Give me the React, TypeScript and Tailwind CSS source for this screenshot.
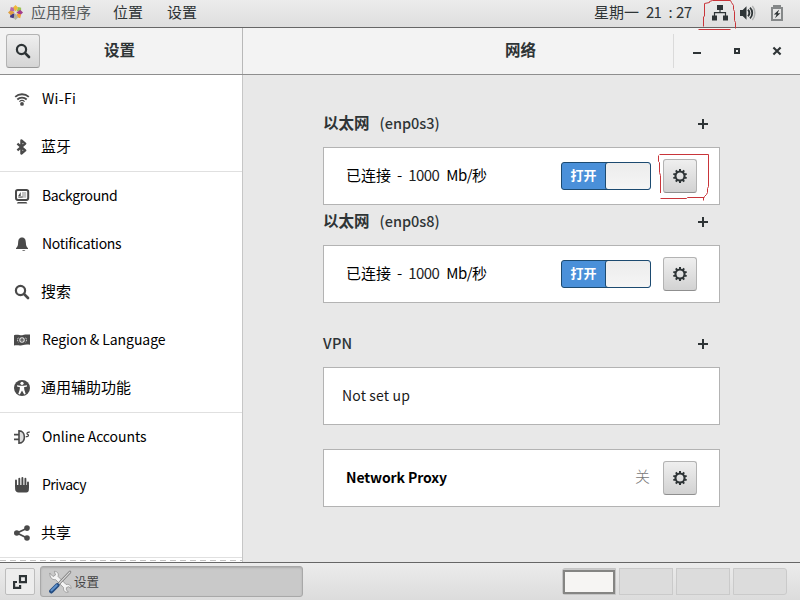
import React from "react";

const INK = "#2e3436";
const GREY = "#4a4a4a";

function Svg({ size = 16, children, className = "" }: { size?: number; children: React.ReactNode; className?: string }) {
  return (
    <svg width={size} height={size} viewBox="0 0 16 16" className={"shrink-0 " + className} fill="none">
      {children}
    </svg>
  );
}

function SearchIcon({ color }: { color: string }) {
  return (
    <Svg>
      <circle cx="6.5" cy="6.5" r="4.6" stroke={color} strokeWidth="2.2" />
      <path d="M9.9 9.9 14 14" stroke={color} strokeWidth="2.7" strokeLinecap="round" />
    </Svg>
  );
}

function GearIcon() {
  const teeth = [0, 36, 72, 108, 144, 180, 216, 252, 288, 324];
  return (
    <Svg>
      <circle cx="8" cy="8" r="4.5" stroke={INK} strokeWidth="2" />
      {teeth.map((a) => (
        <rect key={a} x="7" y="1" width="2" height="3" fill={INK} transform={`rotate(${a} 8 8)`} />
      ))}
    </Svg>
  );
}

const icons: Record<string, React.ReactNode> = {
  wifi: (
    <Svg>
      <path d="M1.2 5.8C5 2.4 11 2.4 14.8 5.8" stroke={GREY} strokeWidth="1.8" />
      <path d="M3.3 8.5C6 6 10 6 12.7 8.5" stroke={GREY} strokeWidth="1.8" />
      <path d="M5.4 10.6C7 9.2 9 9.2 10.6 10.6" stroke={GREY} strokeWidth="1.2" />
      <circle cx="8" cy="12.9" r="1.9" fill={GREY} />
    </Svg>
  ),
  bluetooth: (
    <Svg>
      <path d="M3.4 4.6 11.2 11.4 7.4 14.6V1.4L11.2 4.6 3.4 11.4" stroke={GREY} strokeWidth="2.3" strokeLinejoin="round" />
    </Svg>
  ),
  background: (
    <Svg>
      <rect x="2" y="1.9" width="12.2" height="10" rx="1.8" stroke={GREY} strokeWidth="2" />
      <path d="M7 4h5.2v5.8H5V9h3V4Z" fill="#c4c4c4" />
      <path d="M6.7 4v4H4.2Z" fill={GREY} />
      <path d="M4.2 9h4.4" stroke={GREY} />
      <path d="M3.8 14h8.6l1 1.4H2.8Z" fill={GREY} />
    </Svg>
  ),
  bell: (
    <Svg>
      <path d="M8 1.6C4.9 1.6 4.3 4 4.1 7 4 10 3.2 11 2 12.2V13h12v-.8C12.8 11 12 10 11.9 7c-.2-3-.8-5.4-3.9-5.4Z" fill={GREY} />
      <path d="M8 14h3.4c-.3 1-3 1-3.4 0Z" fill={GREY} />
    </Svg>
  ),
  search: <SearchIcon color={GREY} />,
  region: (
    <Svg>
      <path d="M0 3.2C4 1.8 6 3.8 9 3c2.5-.7 4.5-.6 7-.4v10.2c-3-.8-5-.3-8 .4-3 .6-5-.5-8 .4Z" fill={GREY} />
      <circle cx="8" cy="8" r="2.2" stroke="#e5e5e5" strokeWidth="1.1" />
      <path d="M4.4 5.7c-1.2 1.4-1.2 3.2 0 4.6M11.6 5.7c1.2 1.4 1.2 3.2 0 4.6" stroke="#ccc" strokeWidth="1" strokeDasharray="1.4 .7" />
      <circle cx="8" cy="8" r=".6" fill="#ddd" />
    </Svg>
  ),
  access: (
    <Svg>
      <circle cx="8" cy="8" r="8" fill={GREY} />
      <circle cx="8" cy="3.3" r="1.6" fill="#fff" />
      <path d="M3 5.2 6.4 5.7h3.2L13 5.2v1.3L10 7.3l.4 2.7 1.3 4-1.5.5L8 10.6 5.8 14.5 4.3 14 5.6 10 6 7.3 3 6.5Z" fill="#fff" />
    </Svg>
  ),
  accounts: (
    <Svg>
      <path d="M0 5.6h5M0 10.4h5" stroke={GREY} strokeWidth="1.7" />
      <path d="M5 1.9c7.2 0 7.2 12.2 0 12.2Z" fill="#ddd" stroke={GREY} strokeWidth="1.6" />
      <path d="M11.8 7.6h1.2c1.8 0 2-1.7.6-2.2-1.4-.5-.5-2.6 2.2-2.3" stroke={GREY} strokeWidth="1.2" />
    </Svg>
  ),
  privacy: (
    <Svg>
      <path
        d="M2 3.5v6M5.3 1.8v8M8.4 1v8M11.4 1.8v8M14 5.5v5"
        stroke={GREY}
        strokeWidth="1.9"
        strokeLinecap="round"
      />
      <path d="M1.1 8h13.8v4.6c0 2-1 3-2.6 3H4.6c-2 0-3.5-1.5-3.5-3.5Z" fill={GREY} />
    </Svg>
  ),
  share: (
    <Svg>
      <path d="M13 3.2 3 8l10 5" stroke={GREY} strokeWidth="1.8" />
      <circle cx="13" cy="3.1" r="2.8" fill={GREY} />
      <circle cx="2.8" cy="8" r="2.8" fill={GREY} />
      <circle cx="13" cy="13" r="2.8" fill={GREY} />
    </Svg>
  ),
};

/* Han labels are slightly larger than Latin ones */
const HAN = "text-[15px] -ml-px";

function NavRow({ icon, label, text = HAN }: { icon: string; label: string; text?: string }) {
  return (
    <div className="flex h-12 shrink-0 items-center gap-3 pl-3.5 text-black">
      {icons[icon]}
      <span className={"pb-0.5 leading-5 whitespace-nowrap " + text}>{label}</span>
    </div>
  );
}

function GearButton() {
  return (
    <button className="flex h-[34px] w-[34px] shrink-0 items-center justify-center rounded-[3px] border border-[#b3b3b3] border-b-[#8f8f8f] bg-linear-to-b from-[#efefef] to-[#d2d2d2]">
      <GearIcon />
    </button>
  );
}

function Toggle() {
  return (
    <div className="mr-3 flex h-7 w-[90px] shrink-0 overflow-hidden rounded-[3px] border border-[#1c4a70] bg-[#4a90d9]">
      <div className="flex w-[43px] items-center justify-center pb-[3px] text-[13px] leading-none font-bold text-white">
        打开
      </div>
      <div className="-my-px -mr-px flex-1 rounded-[3px] border border-[#1c4a70] bg-linear-to-b from-[#ececec] to-[#f5f5f5]" />
    </div>
  );
}

function Heading({ children }: { children: React.ReactNode }) {
  return (
    <div className="mb-1.5 flex h-[34px] items-center justify-between pr-3 text-[#2e3436]">
      <div className="flex items-center pb-0.5 whitespace-nowrap">{children}</div>
      <svg width="10" height="10" viewBox="0 0 10 10">
        <path d="M4 0h2v4h4v2H6v4H4V6H0V4h4Z" fill={INK} />
      </svg>
    </div>
  );
}

function Ethernet({ name }: { name: string }) {
  return (
    <section>
      <Heading>
        <span className="text-[15.5px] font-bold">以太网</span>
        <span className="ml-2.5 text-[14.5px] font-medium">({name})</span>
      </Heading>
      <div className="flex h-[58px] items-center border border-[#b3b3b3] bg-white px-[22px] text-[15px] text-black">
        <div className="flex flex-1 items-center pb-0.5 whitespace-nowrap">
          <span>已连接</span>
          <span className="ml-[6px]">-</span>
          <span className="ml-[6px] w-[31px] tracking-[-0.6px] text-[#222]">1000</span>
          <span className="ml-[7px] tracking-[-0.5px]">Mb/</span>
          <span>秒</span>
        </div>
        <Toggle />
        <GearButton />
      </div>
    </section>
  );
}

export default function App() {
  return (
    <div className="relative flex h-[600px] w-[800px] flex-col overflow-hidden bg-[#e8e8e8] font-['Noto_Sans_CJK_SC',sans-serif]">
      <nav className="flex h-7 shrink-0 items-center border-b border-[#666] bg-linear-to-b from-[#ececec] to-[#dedede] pb-[2px] text-[15px] text-[#2e3436]">
        <svg width="15" height="15" viewBox="0 0 16 16" className="ml-2 shrink-0">
          <path d="M8 7 5 3l3-3 3 3Z" fill="#f0b93c" />
          <path d="M9 7 11 2l3 1v3Z" fill="#9bc44e" />
          <path d="m9 8 4-3 3 3-3 3Z" fill="#a23c8c" />
          <path d="m9 9 5 1-1 4-3-1Z" fill="#f2a33a" />
          <path d="m8 9 3 4-3 3-3-3Z" fill="#b5b4a0" />
          <path d="m7 9-1 5-4-1 1-4Z" fill="#463a80" />
          <path d="M7 8 3 11 0 8l3-3Z" fill="#e0a040" />
          <path d="M7 7 2 6l1-4 3 1Z" fill="#b76aa8" />
        </svg>
        <span className="ml-2 text-[#555a5c]">应用程序</span>
        <span className="ml-[22px]">位置</span>
        <span className="ml-6">设置</span>
        <span className="ml-auto">星期一</span>
        <span className="ml-[7px] w-[20px] tracking-[-0.9px]">21</span>
        <span className="w-[9px] text-center">:</span>
        <span className="ml-px w-[16px] tracking-[-0.6px]">27</span>
        <Svg className="ml-5">
          <path d="M5 0h6v5H5ZM0 10.5h5v5H0ZM11 10.5h5v5h-5Z" fill={INK} />
          <path d="M8 4v4M2.5 11V7.7h11V11" stroke={INK} strokeWidth="1.2" />
        </Svg>
        <Svg className="ml-3">
          <path d="M0 5h2.7L6.5 1.3v13.4L2.7 11H0Z" fill={INK} />
          <path d="M8 4.8c1.8 1.6 1.8 4.8 0 6.4" stroke={INK} strokeWidth="2" />
          <path d="M10 2.6c3 2.8 3 8 0 10.8" stroke={INK} strokeWidth="1.8" />
          <path d="M12.3 1c3.4 3.6 3.4 10.4 0 14" stroke="#b2b4b4" strokeWidth="1.5" />
        </Svg>
        <Svg className="mr-[15px] ml-[13px]">
          <path d="M5 2V1h6v1" stroke="#858889" strokeWidth="2" />
          <rect x="3" y="3" width="10" height="12" stroke="#858889" strokeWidth="2" />
          <path d="M10.2 4.6 4.8 9.4h2.8L6 13.3l5.4-5H8.7Z" fill={INK} />
        </Svg>
      </nav>

      <header className="flex h-[47px] shrink-0 border-b border-[#8e8e8e] bg-[#f3f3f3] text-[15.5px] font-bold text-[#2e3436]">
        <div className="flex w-[243px] items-center border-r border-[#b8b8b8] pl-1.5">
          <button className="flex h-[34px] w-[34px] items-center justify-center rounded-[3px] border border-[#b3b3b3] border-b-[#999] bg-linear-to-b from-[#efefef] to-[#d5d5d5]">
            <SearchIcon color={INK} />
          </button>
          <span className="ml-16 pb-1 leading-5">设置</span>
        </div>
        <div className="flex flex-1 items-center">
          <span className="ml-[262px] pb-1 leading-5">网络</span>
          <div className="ml-auto h-[34px] w-px bg-[#dadada]" />
          <svg width="126" height="46" viewBox="0 0 126 46" fill="none">
            <path d="M19 25h8" stroke={INK} strokeWidth="2" />
            <rect x="61" y="21" width="4" height="4" stroke={INK} strokeWidth="2" />
            <path d="m99.4 19.4 7.2 7.2m0-7.2-7.2 7.2" stroke={INK} strokeWidth="2.1" />
          </svg>
        </div>
      </header>

      <div className="flex h-[487px] shrink-0">
        <aside className="flex w-[243px] flex-col overflow-hidden border-r border-[#c6c6c6] bg-white">
          <NavRow icon="wifi" label="Wi-Fi" text="text-[14px] tracking-[0.3px]" />
          <NavRow icon="bluetooth" label="蓝牙" />
          <div className="h-px shrink-0 bg-[#e0e0e0]" />
          <NavRow icon="background" label="Background" text="text-[14px] tracking-[-0.4px]" />
          <NavRow icon="bell" label="Notifications" text="text-[14px] tracking-[-0.3px]" />
          <NavRow icon="search" label="搜索" />
          <NavRow icon="region" label="Region & Language" text="text-[14px] tracking-[-0.07px]" />
          <NavRow icon="access" label="通用辅助功能" />
          <div className="h-px shrink-0 bg-[#e0e0e0]" />
          <NavRow icon="accounts" label="Online Accounts" text="text-[14px] tracking-[-0.07px]" />
          <NavRow icon="privacy" label="Privacy" text="text-[14px] tracking-[-0.5px]" />
          <NavRow icon="share" label="共享" />
          <div className="h-px shrink-0 bg-[#e0e0e0]" />
          <div className="mt-[2px] h-px shrink-0 bg-[repeating-linear-gradient(90deg,#c4c4c4_0_6px,#fff_6px_10px)]" />
        </aside>
        <main className="ml-20 w-[397px] pt-8">
          <Ethernet name="enp0s3" />
          <Ethernet name="enp0s8" />
          <section className="mt-6">
            <Heading>
              <span className="text-[14.5px] font-medium tracking-[0.3px]">VPN</span>
            </Heading>
            <div className="flex h-[58px] items-center border border-[#b3b3b3] bg-white pl-[18px] text-[14px] text-[#1a1a1a]">
              <span className="pb-0.5 tracking-[0.15px]">Not set up</span>
            </div>
          </section>
          <section className="mt-6 flex h-[58px] items-center border border-[#b3b3b3] bg-white px-[22px] text-black">
            <span className="flex-1 pb-0.5 text-[14px] font-bold tracking-[-0.1px]">Network Proxy</span>
            <span className="mr-[13px] pb-1 text-[15px] font-light text-[#777]">关</span>
            <GearButton />
          </section>
        </main>
      </div>

      <footer className="flex h-[38px] shrink-0 items-center border-t border-[#666] bg-linear-to-b from-[#ececec] to-[#dcdcdc] pl-[5px]">
        <button className="flex h-[27px] w-[30px] items-center justify-center rounded-[2px] border border-[#bdbdbd] bg-[#ededed]">
          <svg width="14" height="14" viewBox="0 0 14 14" fill="none" stroke={INK} strokeWidth="2.2">
            <path d="M7 1.1h6v6H7Z" />
            <path d="M4 7H1.1v5.900h6V10" />
          </svg>
        </button>
        <div className="ml-[5px] flex h-[31px] w-[263px] items-center rounded-[3px] border border-[#a8a8a8] bg-[#c9c9c9] pl-[7px] text-[12.5px] text-[#444] shadow-[inset_0_1px_2px_#aaa]">
          <svg width="24" height="24" viewBox="0 0 24 24" fill="none" strokeLinecap="round">
            <path
              d="M2 3.5 5 6.5 7.500 5 6.300 1.300c3 0 4.600 2 3.800 5.200l8 8c3-.8 5 1 5 4l-2.500-1.800-2.200 1v2.200l2 2.200c-3 .8-5.400-1.200-4.800-4.400L7.500 9.600C4 10.200 1.300 7 2 3.500Z"
              fill="#f4f4f4"
              stroke="#909090"
              strokeWidth=".8"
            />
            <path d="M22 2 10 14.5" stroke="#777" strokeWidth="2.6" />
            <path d="M22 2 10 14.5" stroke="#d8d8d8" strokeWidth="1.1" />
            <path d="m9.3 15.3-6 6" stroke="#254d82" strokeWidth="4.4" />
            <path d="m8.7 15.2-5.2 5.2" stroke="#5f92cc" strokeWidth="2" />
          </svg>
          <span className="ml-0.5 pt-px">设置</span>
        </div>
        <div className="mr-[13px] ml-auto flex gap-[3px]">
          <div className="h-[27px] w-[54px] rounded-l-[3px] border border-[#c4c4c4] bg-[#c9c9c9] pt-px">
            <div className="h-6 w-[52px] border-2 border-[#858583] bg-[#f6f5f3]" />
          </div>
          <div className="h-[27px] w-[54px] border border-[#cacaca] bg-[#dcdcdc]" />
          <div className="h-[27px] w-[54px] border border-[#cacaca] bg-[#dcdcdc]" />
          <div className="h-[27px] w-[54px] rounded-r-[3px] border border-[#cacaca] bg-[#dcdcdc]" />
        </div>
      </footer>

      {/* Red pen marks over the network indicator and the first gear button */}
      <svg className="pointer-events-none absolute inset-0" width="800" height="600" fill="none" stroke="#c9353a" strokeWidth="1">
        <path d="M703.5 26.5V17l1-1V3.5l5-1V1.5l3-1h18l1 2 2 3v4l1 2v9l1 2V28.5M698.5 29.5h32" />
        <path d="M658.5 155.5v6l1 1v10l1 3v17.5M659.5 154.5h49v32l-1 2v4l-1 2-2 2-1 1v3M660.5 198.500h26l1-1h17" />
      </svg>
    </div>
  );
}
